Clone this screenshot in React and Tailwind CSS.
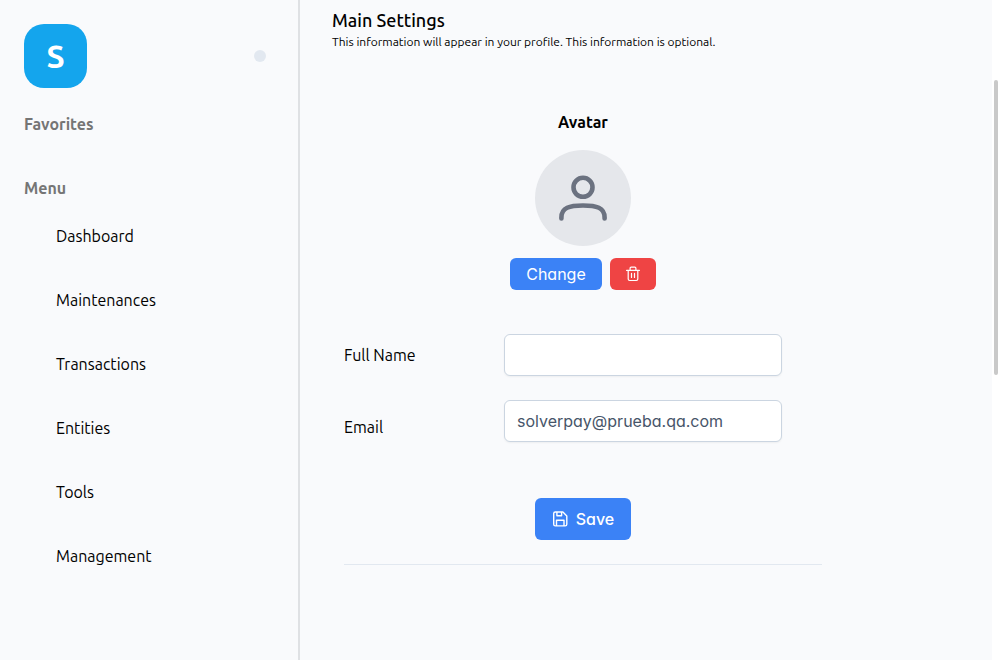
const menu = ["Dashboard", "Maintenances", "Transactions", "Entities", "Tools", "Management"];

const control =
  "font-['Inter',sans-serif] [font-feature-settings:'cv02','cv03','cv04','cv11'] text-base";

function UserIcon() {
  return (
    <svg className="size-12" viewBox="0 0 48 48" fill="none" stroke="currentColor" strokeWidth="4.600" strokeLinecap="round" aria-hidden="true">
      <circle cx="24" cy="13.300" r="9.500" />
      <path d="M2.400 44.500v-1C2.400 33.500 10.500 31.500 24 31.500S45.600 33.500 45.600 43.500v1" />
    </svg>
  );
}

function TrashIcon() {
  return (
    <svg className="size-4" viewBox="0 0 16 16" fill="none" stroke="currentColor" strokeWidth="1.200" strokeLinecap="round" strokeLinejoin="round" aria-hidden="true">
      <path d="M1.600 4.400h12.800M5.100 4.400V2.300c0-.6.500-1.100 1.100-1.100h3.600c.6 0 1.100.5 1.100 1.100v2.100M3.200 4.400v8.700c0 .8.600 1.400 1.400 1.400h6.800c.8 0 1.400-.6 1.400-1.400V4.400M6.500 7.400v4.100M9.500 7.400v4.100" />
    </svg>
  );
}

function SaveIcon() {
  return (
    <svg className="size-4" viewBox="0 0 16 16" fill="none" stroke="currentColor" strokeWidth="1.400" strokeLinejoin="round" aria-hidden="true">
      <path d="M3.300 1h7.600l3.900 3.900v8.400c0 .9-.7 1.600-1.600 1.600H3.300c-.9 0-1.600-.7-1.600-1.600V2.600C1.700 1.700 2.400 1 3.300 1Z" />
      <path d="M4.500 14.900V9.300h7.500v5.600M4.900 1v3.800h4.700V1" />
    </svg>
  );
}

export default function App() {
  return (
    <div className="flex min-h-screen bg-[#f9fafc] font-['Ubuntu','Roboto',sans-serif] text-base text-black">
      <aside className="w-[300px] shrink-0 border-r-2 border-[#dfe1e4] p-6">
        <div className="flex items-center justify-between pr-2">
          <div className="flex h-16 w-[63px] items-center justify-center rounded-[20px] bg-[#14a5ed] text-[32px] font-bold text-white">
            S
          </div>
          <span className="size-3 rounded-full bg-slate-200" />
        </div>
        <h2 className="mt-6 font-bold text-[#757575]">Favorites</h2>
        <h2 className="mt-10 font-bold text-[#757575]">Menu</h2>
        <nav className="mt-6 flex flex-col gap-10 pl-8">
          {menu.map((item) => (
            <a key={item} href="#">{item}</a>
          ))}
        </nav>
      </aside>

      <main className="min-w-0 flex-1 px-8 pt-2">
        <h1 className="text-lg/6 font-medium">Main Settings</h1>
        <p className="text-xs/5">This information will appear in your profile. This information is optional.</p>

        <form className="mt-[58px] ml-3 flex max-w-[478px] flex-col" onSubmit={(e) => e.preventDefault()}>
          <section className="flex flex-col items-center">
            <h2 className="font-bold">Avatar</h2>
            <div className="mt-4 flex size-24 items-center justify-center rounded-full bg-[#e5e7eb] text-[#6b7280]">
              <UserIcon />
            </div>
            <div className="mt-3 flex gap-2">
              <button type="button" className={`${control} h-8 rounded-md bg-[#3b82f6] px-4 text-white`}>
                Change
              </button>
              <button type="button" aria-label="Delete avatar" className="flex h-8 w-[46px] items-center justify-center rounded-md bg-[#ef4444] text-white">
                <TrashIcon />
              </button>
            </div>
          </section>

          <div className="mt-11 flex flex-col gap-6">
            <div className="flex items-center">
              <label htmlFor="name" className="w-40">Full Name</label>
              <input id="name" type="text" className={`${control} h-[42px] w-[278px] rounded-md border border-[#cbd5e1] bg-white px-3 text-[#475569] shadow-xs`} />
            </div>
            <div className="flex items-center">
              <label htmlFor="email" className="w-40 pt-3">Email</label>
              <input id="email" type="email" defaultValue="solverpay@prueba.qa.com" className={`${control} h-[42px] w-[278px] rounded-md border border-[#cbd5e1] bg-white px-3 text-[#475569] shadow-xs`} />
            </div>
          </div>

          <button type="submit" className={`${control} mt-14 flex h-[42px] w-24 items-center justify-center gap-2 self-center rounded-md bg-[#3b82f6] font-medium text-white`}>
            <SaveIcon />
            Save
          </button>
          <hr className="mt-6 border-slate-200" />
        </form>
      </main>

      <div className="w-2 shrink-0 bg-white pt-20 pl-0.5" aria-hidden="true">
        <div className="h-[295px] w-1 rounded-full bg-[#c9c9c9]" />
      </div>
    </div>
  );
}
